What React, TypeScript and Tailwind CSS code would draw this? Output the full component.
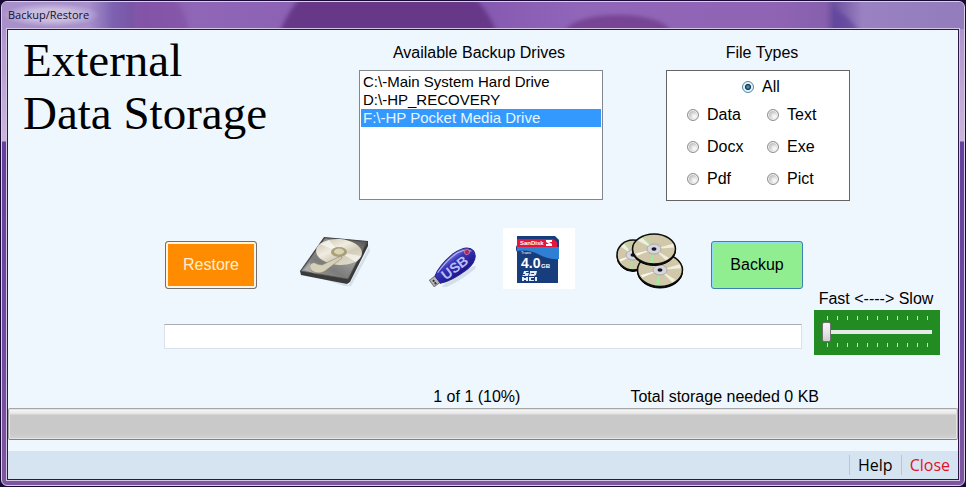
import { useState } from "react";

const drives = ["C:\\-Main System Hard Drive", "D:\\-HP_RECOVERY", "F:\\-HP Pocket Media Drive"];
const fileTypes = ["Data", "Text", "Docx", "Exe", "Pdf", "Pict"];

// Blurred wallpaper showing through the glass title bar
const TitleBarGlass = () => (
  <svg className="absolute inset-0 h-full w-full rounded-t-[5px]" viewBox="0 0 964 27" preserveAspectRatio="none" aria-hidden="true">
    <defs>
      <linearGradient id="glass" x1="0" y1="0" x2="1" y2="0">
        <stop offset="0" stopColor="#a990cb" />
        <stop offset="0.09" stopColor="#a790cc" />
        <stop offset="0.115" stopColor="#7c62b0" />
        <stop offset="0.135" stopColor="#7a55a6" />
        <stop offset="0.145" stopColor="#8959ac" />
        <stop offset="0.2" stopColor="#9066b7" />
        <stop offset="0.5" stopColor="#8559b0" />
        <stop offset="0.6" stopColor="#9066b9" />
        <stop offset="0.8" stopColor="#9064b4" />
        <stop offset="0.855" stopColor="#8660ad" />
        <stop offset="0.865" stopColor="#6e509f" />
        <stop offset="0.895" stopColor="#9a82c2" />
        <stop offset="1" stopColor="#927cbb" />
      </linearGradient>
      <filter id="glassBlur" x="-5%" y="-20%" width="110%" height="140%">
        <feGaussianBlur stdDeviation="2" />
      </filter>
    </defs>
    <path d="M0 0H964V27H0Z" fill="url(#glass)" />
    <g filter="url(#glassBlur)">
      <path d="M138 -4H172Q184 8 188 31H138Z" fill="#7e4fa1" opacity="0.6" />
      <path d="M298 -4H474Q488 10 496 31H278Q284 14 298 -4Z" fill="#673788" />
      <ellipse cx="617" cy="31" rx="53" ry="18" fill="#774593" />
      <path d="M832 6Q848 12 860 31H832Z" fill="#5d449b" opacity="0.7" />
    </g>
  </svg>
);

const HardDriveImage = () => (
  <svg width="72" height="52" viewBox="0 0 72 52" aria-hidden="true">
    <defs>
      <linearGradient id="hddBase" x1="0" y1="1" x2="1" y2="0">
        <stop offset="0" stopColor="#a6a6a4" />
        <stop offset="0.35" stopColor="#7c7c7a" />
        <stop offset="0.6" stopColor="#9a9a98" />
        <stop offset="1" stopColor="#4e4e4e" />
      </linearGradient>
      <linearGradient id="hddDisc" x1="0" y1="0" x2="1" y2="1">
        <stop offset="0" stopColor="#c4bda9" />
        <stop offset="0.4" stopColor="#f0ece0" />
        <stop offset="0.6" stopColor="#d3ccba" />
        <stop offset="1" stopColor="#e6e1d2" />
      </linearGradient>
    </defs>
    <path d="M4 38L50 50L70 12L71 16L52 51L46 51Z" fill="#c3ced9" opacity="0.6" />
    <path d="M1 36L25 2L69 6L69 11L51 47L48 49L2 40Z" fill="#3a3a3a" />
    <path d="M2 36L26 3L68 7L49 44Z" fill="url(#hddBase)" stroke="#565656" strokeWidth="0.700" />
    <ellipse cx="40" cy="17" rx="23" ry="13" fill="url(#hddDisc)" transform="rotate(4 40 17)" />
    <path d="M40 17L21 9L30 5ZM40 17L62 21L57 27Z" fill="#fff" opacity="0.6" />
    <ellipse cx="40" cy="17" rx="8" ry="5" fill="#aaa078" />
    <ellipse cx="40" cy="16.500" rx="5" ry="3" fill="#d9d4b8" />
    <path d="M11 30Q14 26 18 29L23 30L42 21L43 23L26 36Q20 40 13 36Q10 33 11 30Z" fill="#d6d0b9" stroke="#8a8573" strokeWidth="0.600" />
    <path d="M5 35L11 27L12 36L21 40Z" fill="#d5d5d5" opacity="0.4" />
  </svg>
);

const UsbImage = () => (
  <svg width="50" height="40" viewBox="0 0 50 40" aria-hidden="true">
    <defs>
      <linearGradient id="usbBody" x1="0" y1="0" x2="0" y2="1">
        <stop offset="0" stopColor="#8080dc" />
        <stop offset="0.3" stopColor="#3a36b8" />
        <stop offset="1" stopColor="#1a158c" />
      </linearGradient>
    </defs>
    <ellipse cx="30" cy="30" rx="20" ry="3" fill="#c9d4e4" opacity="0.7" transform="rotate(-32 30 30)" />
    <g transform="rotate(-37 26 19)">
      <path d="M-3 15H5V23H-3Z" fill="#b9b9bb" stroke="#77777c" />
      <path d="M-1 17H1V19H-1ZM-1 20H1V22H-1Z" fill="#333" />
      <path d="M4 15Q13 9 32 8Q49 9 50 18Q49 28 34 29Q14 29 4 24Z" fill="url(#usbBody)" stroke="#2a238c" />
      <path d="M8 14Q23 9 36 10Q45 12 48 17" fill="none" stroke="#b8bcf4" />
      <text x="10" y="25" fontFamily="Liberation Sans, sans-serif" fontSize="14" fontWeight="bold" fill="#b9bdf5">USB</text>
      <circle cx="44" cy="15" r="2.500" fill="#a62b62" stroke="#c57099" />
    </g>
  </svg>
);

const SdCardImage = () => (
  <svg width="72" height="61" viewBox="0 0 72 61" aria-hidden="true">
    <path d="M0 0H72V61H0Z" fill="#fff" />
    <path d="M14 8H52L56 12V22L55 24V55H14V24L13 22V19L14 17Z" fill="#173d7d" />
    <path d="M14 19H56V31Q45 32 35 26Q25 21 14 23Z" fill="#2f7fd4" />
    <path d="M14 11H50L54 14V19H14Z" fill="#e5163b" />
    <text x="17" y="17" fontFamily="Liberation Sans, sans-serif" fontSize="6" fontWeight="bold" fill="#fff">SanDisk</text>
    <path d="M43 12H49V14H46L49 16V18H43V16H46L43 14Z" fill="#fff" />
    <text x="18" y="26" fontFamily="Liberation Sans, sans-serif" fontSize="4" fill="#fff">Trans</text>
    <text x="18" y="40" fontFamily="Liberation Sans, sans-serif" fontSize="14" fontWeight="bold" fill="#fff">4.0</text>
    <text x="38" y="40" fontFamily="Liberation Sans, sans-serif" fontSize="6" fontWeight="bold" fill="#fff">GB</text>
    <path d="M21 43H26L25 44H23V45H26L25 48H19L20 47H22V46H20ZM27 43H34L33 47L31 48H26L27 45L29 46H31V45H27Z" fill="#e7edf8" />
    <path d="M19 49H21V50H23V49H25V53H23V52H21V53H19ZM26 49H31V50H28V52H31V53H26ZM32 49H34V53H32Z" fill="#e7edf8" />
  </svg>
);

const Disc = ({ cx, cy, rx, ry }: { cx: number; cy: number; rx: number; ry: number }) => (
  <g transform={`translate(${cx} ${cy})`}>
    <ellipse cx="0" cy="1.500" rx={rx} ry={ry} fill="#000" stroke="#000" />
    <ellipse rx={rx} ry={ry} fill="#d0c8a8" stroke="#0c0c0c" strokeWidth="1.500" />
    <path d={`M0 0L${-rx * 0.75} ${-ry * 0.55}L${-rx * 0.55} ${-ry * 0.75}ZM0 0L${rx * 0.88} ${-ry * 0.35}L${rx * 0.94} ${-ry * 0.1}ZM0 0L${rx * 0.55} ${ry * 0.75}L${rx * 0.7} ${ry * 0.6}Z`} fill="#f1eedd" />
    <path d={`M0 0L${-rx * 0.2} ${ry * 0.9}L${-rx * 0.05} ${ry * 0.92}ZM0 0L${-rx * 0.5} ${-ry * 0.78}L${-rx * 0.42} ${-ry * 0.83}Z`} fill="#a4e8a0" />
    <path d={`M0 0L${-rx * 0.85} ${ry * 0.3}L${-rx * 0.78} ${ry * 0.45}Z`} fill="#f8f6ee" />
    <ellipse rx="7" ry="5" fill="#d6d6dc" stroke="#a0a0a4" strokeWidth="0.800" />
    <ellipse rx="2.500" ry="1.800" fill="#151525" />
  </g>
);

const DiscsImage = () => (
  <svg width="70" height="58" viewBox="0 0 70 58" aria-hidden="true">
    <Disc cx={18} cy={24} rx={16} ry={15} />
    <Disc cx={45} cy={39} rx={22.5} ry={16.5} />
    <Disc cx={39} cy={18} rx={21.5} ry={15} />
  </svg>
);

const FileTypeOption = ({ name, checked, onSelect }: { name: string; checked: boolean; onSelect: (name: string) => void }) => (
  <label className="flex items-center gap-2 leading-5">
    <input
      type="radio"
      name="fileType"
      checked={checked}
      onChange={() => onSelect(name)}
      className="h-3 w-3 appearance-none rounded-full border border-[#8e8f8f] bg-[radial-gradient(circle_at_65%_65%,#f4f4f4_15%,#bfc2c5_60%)] shadow-[inset_0_0_0_1px_#f4f4f4] checked:border-[#5586a3] checked:bg-[radial-gradient(circle_at_50%_50%,#5fb0d0_0,#173a52_38%,#d8eefa_50%)]"
    />
    {name}
  </label>
);

const TickMarks = () => (
  <div className="mr-1 ml-[5px] flex justify-between">
    {Array.from({ length: 11 }, (_, i) => (
      <span key={i} className="h-1 w-px bg-[#c5e8b7]" />
    ))}
  </div>
);

const App = () => {
  const [drive, setDrive] = useState(drives[2]);
  const [fileType, setFileType] = useState("All");
  const [speed, setSpeed] = useState(0);

  return (
    <div className="flex min-h-screen bg-[#170b33] p-px font-['Liberation_Sans',Arial,sans-serif] text-base text-black">
      {/* Window frame */}
      <div className="flex flex-1 flex-col rounded-md border border-[#d9cdea] bg-[linear-gradient(#a78bc8_0,#c3abd8_100px,#cdb4da_139px,#63409b_140px,#6f4aa3_70%,#7f579f_100%)] px-[5px] pb-[5px]">
        <header className="relative -mx-[5px] h-[27px]">
          <TitleBarGlass />
          <h1 className="relative inline-block bg-[radial-gradient(closest-side,rgba(255,255,255,0.4)_50%,transparent)] pr-3 pl-1.5 font-['Open_Sans','Segoe_UI',sans-serif] text-[11px] leading-6 text-[#16102a]">
            Backup/Restore
          </h1>
        </header>

        <main className="z-10 flex flex-1 flex-col border border-[#2d1748] bg-[#eef7fe] shadow-[0_0_0_1px_#d5c6e6]">
          <section className="flex gap-[63px] pr-[108px]">
            <h2 className="flex-1 pt-1 pl-[15px] font-['Liberation_Serif','Times_New_Roman',serif] text-[47px] leading-[53px]">
              External
              <br />
              Data Storage
            </h2>

            <div className="flex w-[244px] flex-col pt-[13px]">
              <label htmlFor="drives" className="pr-1 text-center leading-5">
                Available Backup Drives
              </label>
              <select
                id="drives"
                size={7}
                value={drive}
                onChange={(e) => setDrive(e.target.value)}
                className="mt-[7px] h-[130px] appearance-none overflow-hidden border border-[#82878f] bg-white px-px py-0.5 text-[15px] outline-none"
              >
                {drives.map((name) => (
                  <option
                    key={name}
                    className="h-[18px] min-h-0 px-0.5 py-0 leading-[18px] checked:bg-[linear-gradient(#3399ff,#3399ff)] checked:[-webkit-text-fill-color:#e6f6ff]"
                  >
                    {name}
                  </option>
                ))}
              </select>
            </div>

            <fieldset className="w-[184px] pt-[13px]">
              <legend className="contents">
                <span className="block pl-2 text-center leading-5">File Types</span>
              </legend>
              <div className="mt-[7px] h-[131px] border border-[#646464] bg-white pt-1.5">
                <div className="flex justify-center pl-1.5">
                  <FileTypeOption name="All" checked={fileType === "All"} onSelect={setFileType} />
                </div>
                <div className="mt-2 grid grid-cols-[80px_80px] gap-y-3 pl-5">
                  {fileTypes.map((name) => (
                    <FileTypeOption key={name} name={name} checked={fileType === name} onSelect={setFileType} />
                  ))}
                </div>
              </div>
            </fieldset>
          </section>

          <section className="mt-7 flex h-[60px] items-end justify-between pr-[155px] pl-[157px]">
            <button type="button" className="h-12 w-[92px] rounded-[3px] border border-[#707070] bg-[#ff8c00] text-[#ffefd0] shadow-[inset_0_0_0_2px_#fff4e2]">
              Restore
            </button>
            <div className="flex items-end pl-4">
              <div className="mr-[58px] mb-0.5">
                <HardDriveImage />
              </div>
              <div className="mr-6 mb-0.5">
                <UsbImage />
              </div>
              <div className="mr-10">
                <SdCardImage />
              </div>
              <DiscsImage />
            </div>
            <button type="button" className="h-12 w-[92px] rounded-[3px] border border-[#3c7fb1] bg-[#90ee90] shadow-[inset_0_0_0_1px_#8fdcf5]">
              Backup
            </button>
          </section>

          <section className="flex gap-3 pr-[18px] pl-[156px]">
            <input aria-label="Current file" readOnly className="mt-[35px] h-[25px] min-w-0 flex-1 border border-[#dbe1ea] border-t-[#abadb3] bg-white px-1 outline-none" />
            <div className="w-[126px]">
              <label htmlFor="speed" className="block pr-0.5 pb-0.5 text-center leading-[19px] whitespace-nowrap">
                Fast &lt;----&gt; Slow
              </label>
              <div className="flex h-[45px] flex-col bg-[#228b22] px-2 pt-1.5">
                <TickMarks />
                <input
                  id="speed"
                  type="range"
                  min="0"
                  max="10"
                  value={speed}
                  onChange={(e) => setSpeed(Number(e.target.value))}
                  className="h-[23px] w-full appearance-none bg-transparent [&::-webkit-slider-runnable-track]:h-1 [&::-webkit-slider-runnable-track]:bg-[#e7eaea] [&::-webkit-slider-thumb]:-mt-2 [&::-webkit-slider-thumb]:h-5 [&::-webkit-slider-thumb]:w-[9px] [&::-webkit-slider-thumb]:appearance-none [&::-webkit-slider-thumb]:rounded-xs [&::-webkit-slider-thumb]:border [&::-webkit-slider-thumb]:border-[#707070] [&::-webkit-slider-thumb]:bg-[linear-gradient(#f5f5f5,#e8e8e8_50%,#cfcfcf)]"
                />
                <TickMarks />
              </div>
            </div>
          </section>

          <div className="mt-8 flex justify-end gap-[110px] pr-[139px] leading-5">
            <p>1 of 1 (10%)</p>
            <p>Total storage needed 0 KB</p>
          </div>

          <div
            role="progressbar"
            aria-label="Backup progress"
            aria-valuenow={0}
            className="mt-px h-8 rounded-xs border border-[#a5a5a5] border-b-[#828282] bg-[linear-gradient(#fbfbfb_0,#e3e3e3_5px,#c8c9c8_6px,#c8c9c8_80%,#d2d2d2_100%)] shadow-[inset_0_0_0_1px_#e4e4e4]"
          />

          <footer className="mt-auto flex h-7 items-center justify-end bg-[#d6e4f1] pr-2 font-['Open_Sans','Segoe_UI',sans-serif]">
            <button type="button" className="border-l border-[#b9c5d3] px-2 leading-5">
              Help
            </button>
            <button type="button" className="border-l border-[#b9c5d3] pl-2 leading-5 text-[#e2102a]">
              Close
            </button>
          </footer>
        </main>
      </div>
    </div>
  );
};

export default App;
